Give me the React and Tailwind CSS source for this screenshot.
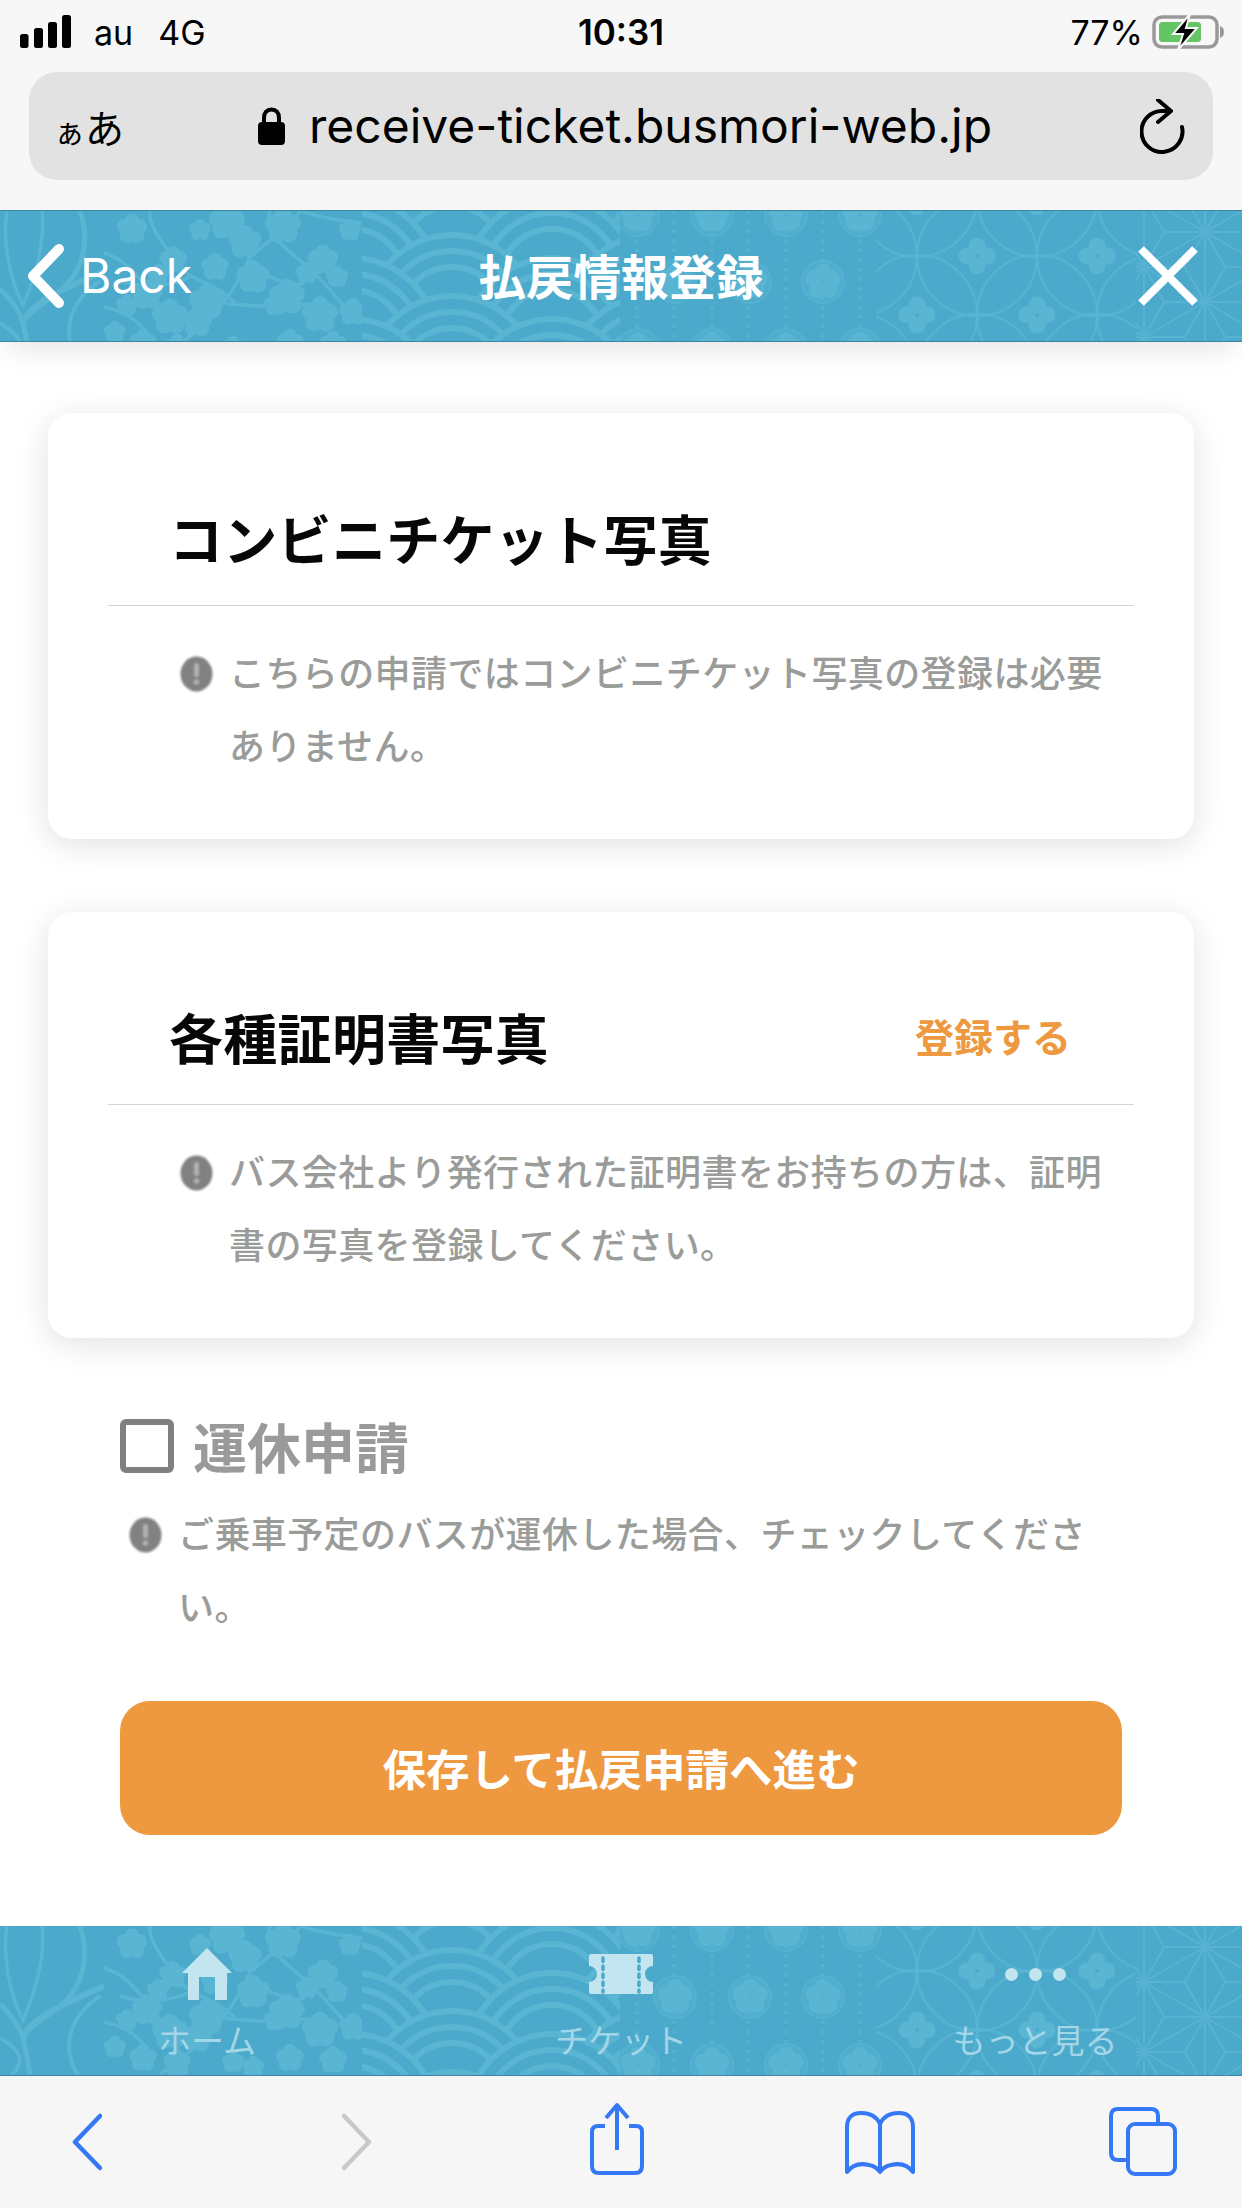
const PATTERN = "#5ab5d3";
const BLUE = "#4ba9cb";

// plum blossoms, measured off the reference (x, y, radius)
const BLOSSOMS = [
  [132, 18, 11], [200, 19, 8], [227, 11, 13], [245, 31, 12], [283, 15, 13], [350, 19, 8],
  [323, 49, 11], [173, 49, 10], [215, 56, 10], [158, 64, 8], [253, 66, 12], [307, 62, 8],
  [337, 66, 8], [287, 86, 13], [147, 84, 11], [127, 94, 8], [275, 94, 8], [207, 91, 13],
  [320, 104, 13], [170, 106, 13], [353, 101, 10], [197, 111, 11], [143, 132, 10], [115, 121, 8],
  [290, 132, 10], [233, 136, 8], [333, 134, 10], [177, 137, 10], [253, 141, 8],
];

const BRANCHES = [
  "M104 42 C125 48 135 62 150 80 C165 100 178 118 186 149",
  "M150 0 C148 16 165 34 175 50 C190 72 215 70 235 92",
  "M300 0 C292 14 268 30 250 46 C240 70 225 92 205 112 C190 128 170 138 160 149",
  "M362 12 C340 10 320 6 300 0",
  "M270 0 C262 24 290 40 310 58 C330 76 345 100 362 112",
  "M225 92 C250 96 280 96 320 92",
  "M120 70 C140 76 165 78 190 66",
  "M104 96 C125 100 135 108 145 120",
  "M262 62 C280 70 290 76 305 72",
];

const SEIGAIHA = [];
for (let row = -2; row < 5; row++) {
  for (const x of [252, 452, 652]) SEIGAIHA.push({ x, y: 24 + row * 61 + 85 });
  for (const x of [352, 552]) SEIGAIHA.push({ x, y: 47 + row * 61 + 85 });
}
SEIGAIHA.sort((a, b) => a.y - b.y);

const SHIPPO = [];
for (let row = -1; row < 4; row++) {
  const odd = Math.abs(row) % 2 === 1;
  for (const x of odd ? [917, 1037, 1157] : [857, 977, 1097, 1217]) {
    SHIPPO.push({ x, y: 45 + row * 59 });
  }
}

// asanoha lattice: join neighbouring hubs, then each triangle's centre to its corners
const HUBS = [];
for (let col = -1; col < 3; col++) {
  for (let k = -2; k < 4; k++) {
    HUBS.push([1144 + col * 61, 56 + k * 70 + (Math.abs(col) % 2 === 1 ? -35 : 0)]);
  }
}
const near = (a, b) => Math.hypot(a[0] - b[0], a[1] - b[1]) < 76;
const ASANOHA = [];
HUBS.forEach((a, i) => {
  HUBS.forEach((b, j) => {
    if (j <= i || !near(a, b)) return;
    ASANOHA.push([a, b]);
    HUBS.forEach((c, l) => {
      if (l <= j || !near(a, c) || !near(b, c)) return;
      const g = [(a[0] + b[0] + c[0]) / 3, (a[1] + b[1] + c[1]) / 3];
      ASANOHA.push([g, a], [g, b], [g, c]);
    });
  });
});

function Blossom({ x, y, r }) {
  const size = r * 1.35;
  return (
    <g fill={PATTERN}>
      <circle cx={x} cy={y} r={size * 0.6} />
      {[0, 72, 144, 216, 288].map((a) => (
        <circle
          key={a}
          cx={x + Math.sin((a * Math.PI) / 180) * size * 0.55}
          cy={y - Math.cos((a * Math.PI) / 180) * size * 0.55}
          r={size * 0.5}
        />
      ))}
    </g>
  );
}

function Plum({ x, y }) {
  return (
    <g>
      <circle cx={x} cy={y} r={21} fill={PATTERN} fillOpacity={0.35} stroke={PATTERN} strokeWidth={2} strokeOpacity={0.6} />
      {[0, 72, 144, 216, 288].map((a) => (
        <circle
          key={a}
          cx={x + Math.sin((a * Math.PI) / 180) * 9.5}
          cy={y - Math.cos((a * Math.PI) / 180) * 9.5}
          r={8.5}
          fill={PATTERN}
        />
      ))}
    </g>
  );
}

function Pattern() {
  return (
    <svg width="1242" height="149" viewBox="0 0 1242 149" className="absolute top-0 left-0">
      <defs>
        <clipPath id="clip-wave"><rect x="362" y="0" width="258" height="149" /></clipPath>
        <clipPath id="clip-shippo"><rect x="876" y="0" width="260" height="149" /></clipPath>
        <clipPath id="clip-asanoha"><rect x="1136" y="0" width="106" height="149" /></clipPath>
      </defs>

      {/* stems */}
      <g fill="none" stroke={PATTERN} strokeWidth="3.5">
        <path d="M7 0 C2 30 10 70 23 94 C34 70 46 30 42 0" />
        <path d="M80 0 C90 30 84 60 60 80 C45 92 30 100 23 110" strokeWidth="5" />
        <path d="M0 78 C12 90 20 100 23 112 C26 125 28 135 30 149" strokeWidth="5" />
        <path d="M104 60 C60 80 30 92 23 112" strokeWidth="6" />
        <path d="M100 70 C70 90 60 120 78 149" strokeWidth="4" />
        <path d="M0 112 C22 125 25 135 12 149" strokeWidth="4" />
      </g>

      {/* plum branch */}
      <g fill="none" stroke={PATTERN} strokeWidth="3.5">
        {BRANCHES.map((d) => <path key={d} d={d} />)}
      </g>
      {BLOSSOMS.map(([x, y, r]) => <Blossom key={`${x}-${y}`} x={x} y={y} r={r} />)}
      <rect x="362" y="0" width="258" height="149" fill={BLUE} />

      {/* seigaiha */}
      <g clipPath="url(#clip-wave)">
        {SEIGAIHA.map(({ x, y }) => (
          <g key={`${x}-${y}`} fill={BLUE} stroke={PATTERN} strokeWidth="6">
            <circle cx={x} cy={y} r={85} />
            <circle cx={x} cy={y} r={69} />
            <circle cx={x} cy={y} r={53} />
          </g>
        ))}
      </g>

      {/* dotted columns with plum crests */}
      <g stroke={PATTERN} strokeWidth="3" strokeDasharray="3 6.5" opacity="0.8">
        {[637, 674, 712, 748, 786, 823, 860].map((x) => <path key={x} d={`M${x} 0 V149`} />)}
      </g>
      {[638, 712, 786, 860].map((x) => (
        <g key={x}>
          <Plum x={x} y={4} />
          <Plum x={x} y={139} />
        </g>
      ))}
      {[675, 750, 823].map((x) => <Plum key={x} x={x} y={71} />)}

      {/* shippo */}
      <g clipPath="url(#clip-shippo)">
        {SHIPPO.map(({ x, y }) => (
          <g key={`${x}-${y}`}>
            <circle cx={x} cy={y} r={60} fill="none" stroke={PATTERN} strokeWidth="2.5" opacity="0.75" />
            {[[0, -10], [10, 0], [0, 10], [-10, 0]].map(([dx, dy]) => (
              <circle key={`${dx}${dy}`} cx={x + dx} cy={y + dy} r={8.5} fill={PATTERN} />
            ))}
          </g>
        ))}
      </g>

      {/* asanoha */}
      <g clipPath="url(#clip-asanoha)" stroke={PATTERN} strokeWidth="2" opacity="0.85">
        {ASANOHA.map(([a, b], i) => <line key={i} x1={a[0]} y1={a[1]} x2={b[0]} y2={b[1]} />)}
      </g>
    </svg>
  );
}

function NoteIcon() {
  return (
    <svg width="33" height="36" viewBox="0 0 33 36" className="shrink-0 blur-[0.8px]">
      <ellipse cx="16.5" cy="18" rx="16" ry="17.5" fill="#808280" />
      <rect x="14" y="7" width="5" height="14" rx="2" fill="#b0b1b0" />
      <circle cx="16.5" cy="26" r="2.8" fill="#b0b1b0" />
    </svg>
  );
}

function Note({ children }) {
  return (
    <div className="flex items-start gap-[16px] text-[36px] leading-[73px] font-medium tracking-[0.4px] text-[#9a9c99]">
      <div className="flex h-[73px] items-center">
        <NoteIcon />
      </div>
      <p className="-mt-[2px] flex-1">{children}</p>
    </div>
  );
}

function Card({ title, action, children }) {
  return (
    <section className="h-[426px] rounded-[24px] bg-white px-[60px] shadow-[0_6px_32px_rgba(0,0,0,0.12)]">
      <div className="flex items-center justify-between border-b border-[#d4d4d4] pt-[90px] pr-[63px] pb-[32px] pl-[61px]">
        <h2 className="text-[54px] leading-[70px] font-bold tracking-[0.3px] text-[#050805]">{title}</h2>
        {action && <span className="mb-[5px] text-[39px] leading-[60px] font-bold text-[#ee9840]">{action}</span>}
      </div>
      <div className="pt-[31px] pr-[20px] pl-[72px]">
        <Note>{children}</Note>
      </div>
    </section>
  );
}

function TabItem({ label, children }) {
  return (
    <div className="flex flex-col items-center pt-[22px]">
      <div className="flex h-[52px] items-center justify-center">{children}</div>
      <span className="mt-[19px] text-[33px] leading-[40px] text-[#a3d6e7]">{label}</span>
    </div>
  );
}

export default function App() {
  return (
    <div className="flex h-[2208px] w-[1242px] flex-col overflow-hidden bg-white [font-family:'Noto_Sans_CJK_JP',sans-serif]">
      {/* browser chrome */}
      <div className="h-[210px] shrink-0 bg-[#f7f7f7] [font-family:Inter,sans-serif]">
        <div className="grid h-[72px] grid-cols-3 items-center pb-[8px] text-[34px] text-black">
          <div className="flex items-center">
            <svg width="52" height="34" viewBox="0 0 52 34" className="ml-[20px]" fill="#000">
              <rect x="0" y="19" width="8.5" height="14" rx="2.5" />
              <rect x="14" y="13" width="9" height="20" rx="2.5" />
              <rect x="28" y="7" width="9" height="26" rx="2.5" />
              <rect x="42" y="0" width="9" height="33" rx="2.5" />
            </svg>
            <span className="ml-[22px]">au</span>
            <span className="ml-[25px]">4G</span>
          </div>
          <span className="text-center text-[35px] font-semibold">10:31</span>
          <div className="flex items-center justify-end pr-[16px]">
            <span>77%</span>
            <svg width="74" height="36" viewBox="0 0 74 36" className="ml-[9px]">
              <rect x="2" y="3" width="63" height="30" rx="8" fill="none" stroke="#999" strokeWidth="3.5" />
              <path d="M68 12 C71 13 72 15 72 18 C72 21 71 23 68 24 Z" fill="#999" />
              <rect x="7" y="8" width="42" height="20" rx="3.5" fill="#65c466" />
              <path d="M38 0 L21 20 H31 L26 36 L45 14 H34 Z" fill="#000" stroke="#f7f7f7" strokeWidth="2" />
            </svg>
          </div>
        </div>
        <div className="mx-[29px] flex h-[108px] items-center rounded-[28px] bg-[#e2e2e2] pr-[27px] pl-[25px]">
          <span className="flex w-[70px] items-baseline text-black [font-family:'Noto_Sans_CJK_JP',sans-serif]">
            <span className="text-[31px]">ぁ</span>
            <span className="text-[39px]">あ</span>
          </span>
          <svg width="27" height="38" viewBox="0 0 27 38" className="ml-[134px]">
            <path d="M6 17 V11 C6 5.5 9 2.5 13.5 2.5 C18 2.5 21 5.5 21 11 V17" fill="none" stroke="#000" strokeWidth="4" />
            <rect x="0" y="15" width="27" height="23" rx="4" fill="#000" />
          </svg>
          <span className="ml-[24px] flex-1 text-[48px] leading-none text-black">receive-ticket.busmori-web.jp</span>
          <svg width="46" height="60" viewBox="0 0 46 60" className="mt-[6px]">
            <path d="M42 28 A20.5 20.5 0 1 1 23 12 L29 12" fill="none" stroke="#000" strokeWidth="4" strokeLinecap="round" />
            <path d="M18 1 L31 12 L18 23" fill="none" stroke="#000" strokeWidth="4" strokeLinecap="round" strokeLinejoin="round" />
          </svg>
        </div>
      </div>

      {/* app header */}
      <header className="relative z-10 h-[132px] shrink-0 border-y border-[#3d85a3] bg-[#4ba9cb] shadow-[0_16px_26px_-8px_rgba(0,0,0,0.1)]">
        <div className="absolute inset-0 overflow-hidden">
          <Pattern />
        </div>
        <div className="relative grid h-full grid-cols-3 items-center text-white">
          <div className="flex items-center pl-[26px]">
            <svg width="40" height="66" viewBox="0 0 40 66" fill="none" stroke="#fff" strokeWidth="10" strokeLinecap="round" strokeLinejoin="round">
              <path d="M33 6 L7 33 L33 60" />
            </svg>
            <span className="ml-[14px] text-[48px] leading-none [font-family:Inter,sans-serif]">Back</span>
          </div>
          <h1 className="-mt-[3px] text-center text-[47.5px] leading-none font-bold">払戻情報登録</h1>
          <div className="flex justify-end pr-[44px]">
            <svg width="60" height="60" viewBox="0 0 60 60" stroke="#fff" strokeWidth="8">
              <path d="M3 3 L57 57 M57 3 L3 57" />
            </svg>
          </div>
        </div>
      </header>

      {/* content */}
      <main className="flex-1 px-[48px] pt-[71px]">
        <div className="flex flex-col gap-[73px]">
          <Card title="コンビニチケット写真">
            こちらの申請ではコンビニチケット写真の登録は必要ありません。
          </Card>
          <Card title="各種証明書写真" action="登録する">
            バス会社より発行された証明書をお持ちの方は、証明書の写真を登録してください。
          </Card>
        </div>

        <div className="mt-[81px] px-[72px]">
          <div className="flex items-center gap-[19px]">
            <div className="h-[54px] w-[54px] rounded-[6px] border-[6px] border-[#808080]" />
            <span className="text-[54px] leading-[54px] font-bold text-[#999b98]">運休申請</span>
          </div>
          <div className="mt-[25px] pl-[9px]">
            <Note>ご乗車予定のバスが運休した場合、チェックしてください。</Note>
          </div>
          <button className="mt-[59px] h-[134px] w-[1002px] rounded-[30px] bg-[#ee9840] text-[43.5px] font-bold text-[#fff]">
            保存して払戻申請へ進む
          </button>
        </div>
      </main>

      {/* tab bar */}
      <nav className="relative h-[150px] shrink-0 border-b border-[#3d85a3] bg-[#4ba9cb]">
        <div className="absolute inset-0 overflow-hidden">
          <Pattern />
        </div>
        <div className="relative grid h-full grid-cols-3">
          <TabItem label="ホーム">
            <svg width="50" height="52" viewBox="0 0 50 52" fill="#c2e5f0">
              <path d="M25 0 L50 25 H45 V52 H33 V29 H17 V52 H6 V25 H0 Z" />
            </svg>
          </TabItem>
          <TabItem label="チケット">
            <svg width="64" height="40" viewBox="0 0 64 40">
              <path
                d="M2 0 H62 Q64 0 64 2 V12 A8 8 0 0 0 64 28 V38 Q64 40 62 40 H2 Q0 40 0 38 V28 A8 8 0 0 0 0 12 V2 Q0 0 2 0 Z"
                fill="#c2e5f0"
              />
              <g stroke="#4ba9cb" strokeWidth="3.5" strokeDasharray="3.5 4.5" strokeLinecap="round">
                <path d="M14 4 V38" />
                <path d="M50 4 V38" />
              </g>
            </svg>
          </TabItem>
          <TabItem label="もっと見る">
            <div className="flex gap-[11px]">
              <div className="h-[13px] w-[13px] rounded-full bg-[#c2e5f0]" />
              <div className="h-[13px] w-[13px] rounded-full bg-[#c2e5f0]" />
              <div className="h-[13px] w-[13px] rounded-full bg-[#c2e5f0]" />
            </div>
          </TabItem>
        </div>
      </nav>

      {/* browser toolbar */}
      <div className="flex h-[132px] shrink-0 items-center bg-[#f6f6f6]">
        <svg width="30" height="80" viewBox="0 0 30 80" className="ml-[72px]" fill="none" stroke="#3478f6" strokeWidth="4.5" strokeLinecap="round" strokeLinejoin="round">
          <path d="M28 14 L3 40 L28 66" />
        </svg>
        <svg width="30" height="80" viewBox="0 0 30 80" className="ml-[240px]" fill="none" stroke="#c8c8c8" strokeWidth="4.5" strokeLinecap="round" strokeLinejoin="round">
          <path d="M2 14 L27 40 L2 66" />
        </svg>
        <svg width="54" height="80" viewBox="0 0 54 80" className="ml-[218px]" fill="none" stroke="#3478f6" strokeWidth="4" strokeLinejoin="round">
          <path d="M15 24 H8 Q2 24 2 30 V64 Q2 71 9 71 H45 Q52 71 52 64 V30 Q52 24 46 24 H39" />
          <path d="M27 48 V4 M16 16 L27 3 L38 16" />
        </svg>
        <svg width="70" height="80" viewBox="0 0 70 80" className="ml-[201px]" fill="none" stroke="#3478f6" strokeWidth="4" strokeLinejoin="round">
          <path d="M35 22 C31 13 24 11 16 11 C7 11 2 16 2 25 V70 C8 62 16 61 24 63 C29 64 33 67 35 70 C37 67 41 64 46 63 C54 61 62 62 68 70 V25 C68 16 63 11 54 11 C46 11 39 13 35 22 V70" />
        </svg>
        <svg width="68" height="80" viewBox="0 0 68 80" className="ml-[194px]" fill="none" stroke="#3478f6" strokeWidth="4">
          <path d="M18 58 H9 Q2 58 2 51 V14 Q2 7 9 7 H42 Q49 7 49 14 V22" />
          <rect x="19" y="22" width="47" height="50" rx="7" />
        </svg>
      </div>
    </div>
  );
}
